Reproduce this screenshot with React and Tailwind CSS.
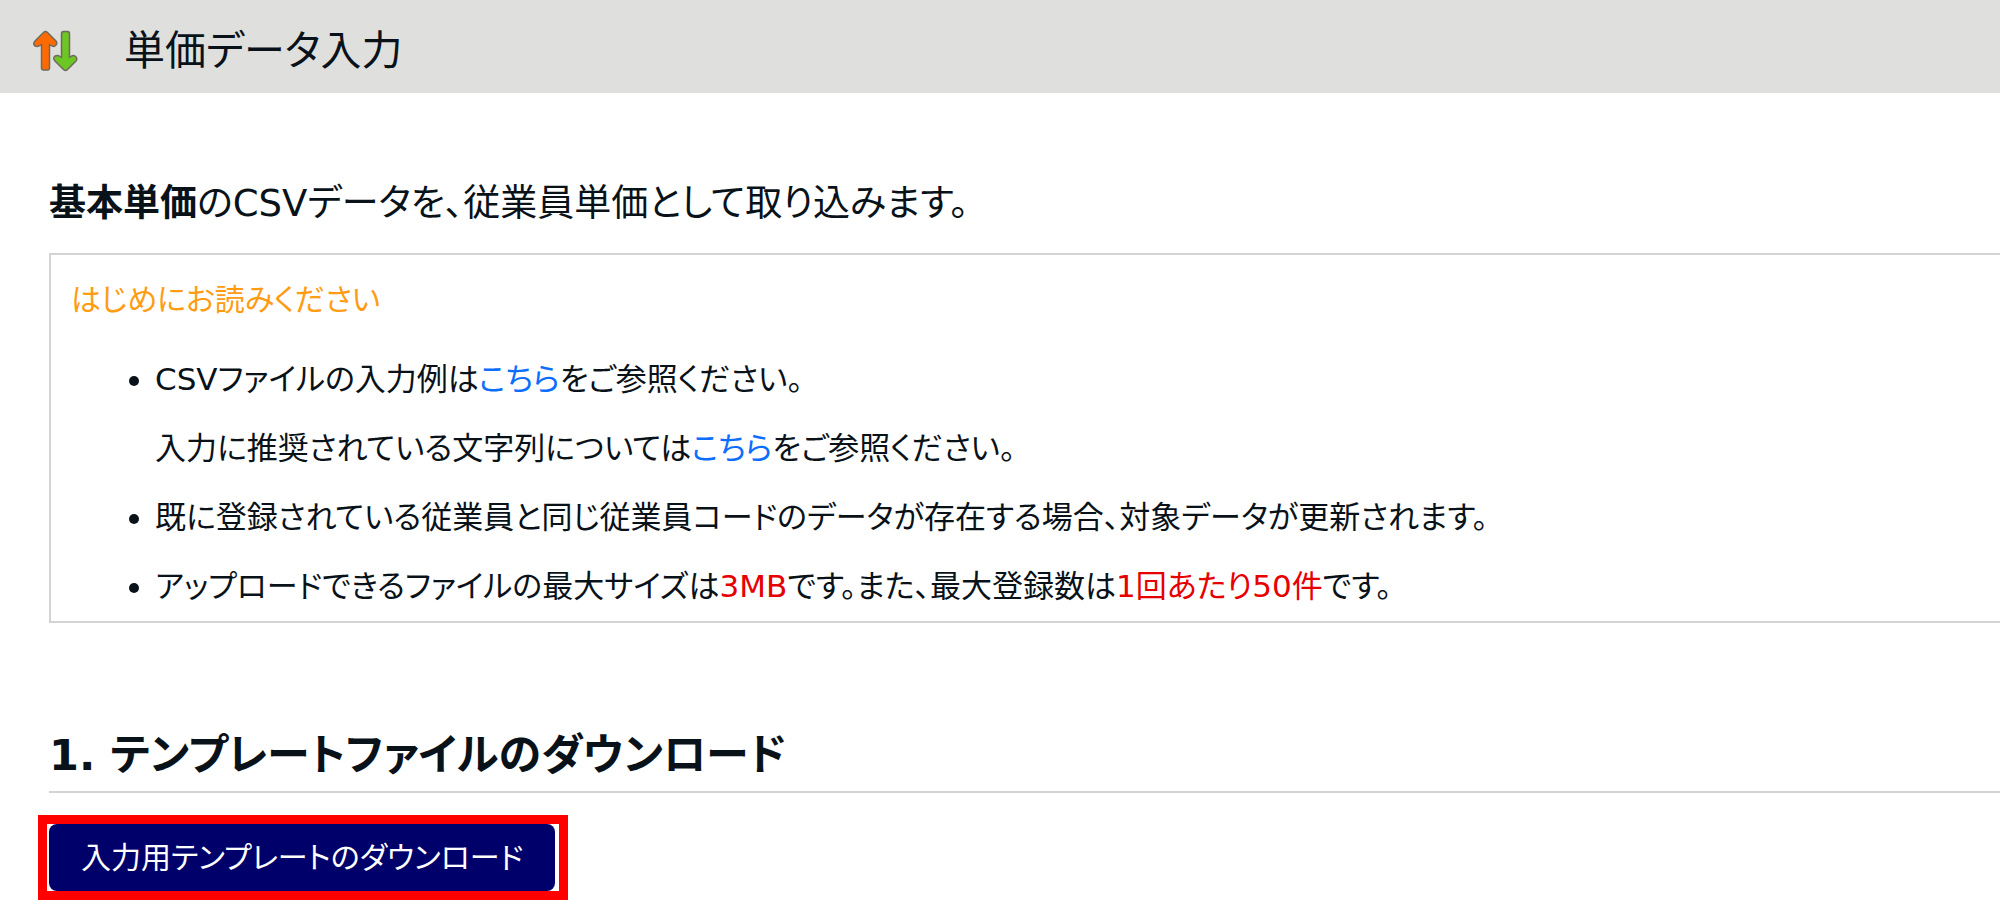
function TransferIcon() {
  return (
    <svg viewBox="0 0 46 42" className="h-[42px] w-[46px] shrink-0" aria-hidden="true">
      <g stroke="#6f6a5c" strokeWidth="1.5" strokeLinejoin="round">
        <path
          fill="#ff6a00"
          d="M11.500 2.500 Q13.500 0.500 15.500 2.500 L24 11 Q26 14 23 16 Q21 17 19 15.500 L17.500 14.500 L17.500 38 Q17.500 40 15.500 40 L11.500 40 Q9.500 40 9.500 38 L9.500 14.500 L8 15.500 Q6 17 3 16 Q0.500 14 3 11 Z"
        />
        <path
          fill="#6cc624"
          d="M31.500 39.500 Q33.500 41.500 35.500 39.500 L44 31 Q46 28 43 26 Q41 25 39 26.500 L37.500 27.500 L37.500 4 Q37.500 1.500 35.500 1.500 L31.500 1.500 Q29.500 1.500 29.500 4 L29.500 27.500 L28 26.500 Q26 25 23 26 Q20.500 28 23 31 Z"
        />
      </g>
    </svg>
  )
}

function TextLink({ children }) {
  return <a href="#" className="text-[#0d6efd] hover:underline">{children}</a>
}

export default function App() {
  return (
    <div className="min-h-screen overflow-x-hidden bg-white font-['DejaVu_Sans','Noto_Sans_CJK_JP',sans-serif] font-normal text-[#0a1219] [font-feature-settings:'palt']" lang="ja">
      <header className="flex h-[93px] items-center gap-[46px] bg-[#dfdfdd] px-8 pt-2">
        <TransferIcon />
        <h1 className="text-[41px] leading-[60px]">単価データ入力</h1>
      </header>

      <main className="pt-[82px] pl-[49px]">
        <p className="text-[37px] leading-[58px]">
          <strong className="font-bold">基本単価</strong>のCSVデータを、従業員単価として取り込みます。
        </p>

        <section className="mt-5 border-y-2 border-l-2 border-[#d3d3d3] pt-4 pl-5 text-[31px]">
          <h2 className="text-[30px] leading-[58px] text-[#ff9c12]">はじめにお読みください</h2>
          <ul className="mt-4 list-disc pl-[84px] leading-[69px]">
            <li>
              CSVファイルの入力例は<TextLink>こちら</TextLink>をご参照ください。
              <br />
              入力に推奨されている文字列については<TextLink>こちら</TextLink>をご参照ください。
            </li>
            <li>既に登録されている従業員と同じ従業員コードのデータが存在する場合、対象データが更新されます。</li>
            <li>
              アップロードできるファイルの最大サイズは<span className="text-[#e60000]">3MB</span>です。また、最大登録数は
              <span className="text-[#e60000]">1回あたり50件</span>です。
            </li>
          </ul>
        </section>

        <section className="mt-24">
          <h2 className="border-b-2 border-[#d3d3d3] text-[43px] leading-[72px] font-bold">
            1. テンプレートファイルのダウンロード
          </h2>
          <div className="mt-[22px] -ml-[11px] inline-flex border-[9px] border-[#ff0000] pr-1 pl-[2px]">
            <button type="button" className="h-[67px] rounded-lg bg-[#00006b] px-8 text-[30px] text-white">
              入力用テンプレートのダウンロード
            </button>
          </div>
        </section>
      </main>
    </div>
  )
}
